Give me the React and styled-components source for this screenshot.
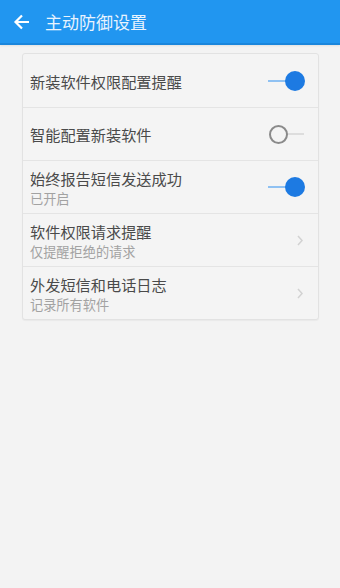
import React, { useState } from "react";
import styled, { createGlobalStyle } from "styled-components";

const GlobalStyle = createGlobalStyle`
    html, body {
        margin: 0;
        padding: 0;
        background: #f3f3f3;
        font-family: "Noto Sans CJK SC", "Noto Sans", sans-serif;
    }
`;

const Page = styled.div`
    width: 340px;
    min-height: 588px;
    background: #f3f3f3;
`;

const TopBar = styled.div`
    height: 43px;
    background: #2196f0;
    border-bottom: 2px solid #1a86dc;
    display: flex;
    align-items: center;
    color: #fff;
    box-shadow: 0 1px 2px rgba(0, 0, 0, 0.08);
`;

const BackButton = styled.div`
    width: 44px;
    height: 43px;
    display: flex;
    align-items: center;
    justify-content: center;
    svg {
        display: block;
    }
`;

const Title = styled.h1`
    margin: 0 0 0 1px;
    font-size: 17px;
    font-weight: 400;
    color: #e8f3fe;
`;

const Card = styled.div`
    margin: 8px 21px 0 22px;
    background: #f4f4f4;
    border: 1px solid #e2e2e2;
    border-radius: 3px;
    box-shadow: 0 1px 1px rgba(0, 0, 0, 0.04);
`;

const Row = styled.div`
    height: 53px;
    display: flex;
    align-items: center;
    padding: 0 12px 0 7px;
    border-top: ${(p) => (p.first ? "none" : "1px solid #e4e4e4")};
    box-sizing: border-box;
`;

const Texts = styled.div`
    flex: 1;
    display: flex;
    flex-direction: column;
`;

const Label = styled.div`
    font-size: 15.2px;
    color: #4a4a4a;
    line-height: 22px;
`;

const Sub = styled.div`
    font-size: 13.2px;
    color: #a2a2a2;
    line-height: 19px;
`;

const SwitchBox = styled.div`
    position: relative;
    width: 38px;
    height: 22px;
    cursor: pointer;
`;

const Track = styled.div`
    position: absolute;
    top: 10px;
    height: 2px;
    left: ${(p) => (p.on ? "0" : "18px")};
    width: ${(p) => (p.on ? "22px" : "18px")};
    background: ${(p) => (p.on ? "#8fc1f2" : "#dddddd")};
`;

const Thumb = styled.div`
    position: absolute;
    top: ${(p) => (p.on ? "1px" : "2px")};
    left: ${(p) => (p.on ? "17px" : "1px")};
    box-sizing: border-box;
    width: ${(p) => (p.on ? "20px" : "19px")};
    height: ${(p) => (p.on ? "20px" : "19px")};
    border-radius: 50%;
    background: ${(p) => (p.on ? "#1d7ae2" : "transparent")};
    border: ${(p) => (p.on ? "none" : "2px solid #8a8a8a")};
`;

const Chevron = styled.div`
    width: 20px;
    display: flex;
    justify-content: flex-end;
    padding-right: 3px;
`;

function Switch({ on, onToggle }) {
    return (
        <SwitchBox onClick={onToggle}>
            <Track on={on} />
            <Thumb on={on} />
        </SwitchBox>
    );
}

function Arrow() {
    return (
        <Chevron>
            <svg width="6" height="11" viewBox="0 0 6 11">
                <path d="M1 1l4 4.5L1 10" stroke="#d2d2d2" strokeWidth="1.5" fill="none" />
            </svg>
        </Chevron>
    );
}

export default function App() {
    const [install, setInstall] = useState(true);
    const [smart, setSmart] = useState(false);
    const [report, setReport] = useState(true);

    return (
        <Page>
            <GlobalStyle />
            <TopBar>
                <BackButton>
                    <svg width="18" height="18" viewBox="0 0 18 18">
                        <path
                            d="M16 9H3M9 2.5L2.5 9 9 15.5"
                            stroke="#fff"
                            strokeWidth="2.2"
                            fill="none"
                        />
                    </svg>
                </BackButton>
                <Title>主动防御设置</Title>
            </TopBar>
            <Card>
                <Row first>
                    <Texts>
                        <Label>新装软件权限配置提醒</Label>
                    </Texts>
                    <Switch on={install} onToggle={() => setInstall(!install)} />
                </Row>
                <Row>
                    <Texts>
                        <Label>智能配置新装软件</Label>
                    </Texts>
                    <Switch on={smart} onToggle={() => setSmart(!smart)} />
                </Row>
                <Row>
                    <Texts>
                        <Label>始终报告短信发送成功</Label>
                        <Sub>{report ? "已开启" : "已关闭"}</Sub>
                    </Texts>
                    <Switch on={report} onToggle={() => setReport(!report)} />
                </Row>
                <Row>
                    <Texts>
                        <Label>软件权限请求提醒</Label>
                        <Sub>仅提醒拒绝的请求</Sub>
                    </Texts>
                    <Arrow />
                </Row>
                <Row>
                    <Texts>
                        <Label>外发短信和电话日志</Label>
                        <Sub>记录所有软件</Sub>
                    </Texts>
                    <Arrow />
                </Row>
            </Card>
        </Page>
    );
}
